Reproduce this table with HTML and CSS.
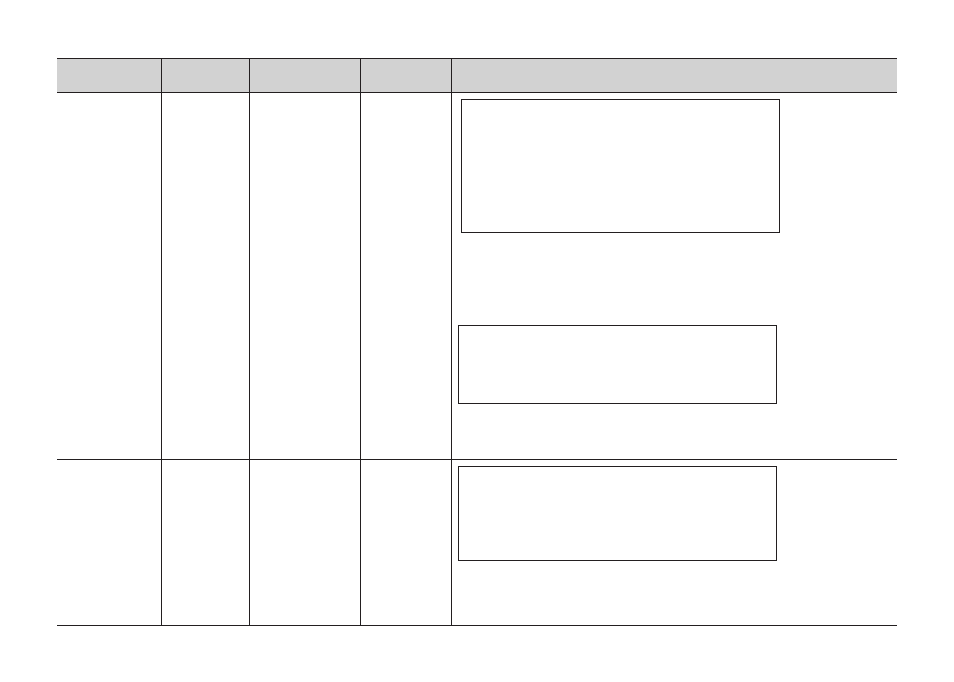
FILE: index.html
```html
<!DOCTYPE html>
<html>
<head>
<meta charset="utf-8">
<link rel="stylesheet" href="styles.css">
</head>
<body>
<div class="table">
  <div class="row head">
    <div class="cell c1"></div>
    <div class="cell c2"></div>
    <div class="cell c3"></div>
    <div class="cell c4"></div>
    <div class="cell c5"></div>
  </div>
  <div class="row r1">
    <div class="cell c1"></div>
    <div class="cell c2"></div>
    <div class="cell c3"></div>
    <div class="cell c4"></div>
    <div class="cell c5">
      <div class="box box-a"></div>
      <div class="box box-b"></div>
    </div>
  </div>
  <div class="row r2">
    <div class="cell c1"></div>
    <div class="cell c2"></div>
    <div class="cell c3"></div>
    <div class="cell c4"></div>
    <div class="cell c5">
      <div class="box box-c"></div>
    </div>
  </div>
</div>
</body>
</html>
```
FILE: styles.css
```css
* { box-sizing: border-box; }
html, body { margin: 0; padding: 0; background: #ffffff; }
body { font-family: "Liberation Sans", Arial, sans-serif; }

.table {
  margin: 58px 0 0 57px;
  width: 840px;
  border-top: 1px solid #231f20;
  display: flex;
  flex-direction: column;
}
.row {
  display: grid;
  grid-template-columns: 105px 88px 111px 91px 445px;
  border-bottom: 1px solid #231f20;
}
.head { height: 34px; background: #d2d2d2; }
.r1 { height: 367px; }
.r2 { height: 166px; }

.cell { border-right: 1px solid #231f20; }
.cell.c5 { border-right: none; display: flex; flex-direction: column; padding-top: 6px; }

.box { border: 1px solid #231f20; width: 319px; }
.box-a { margin-left: 9px; height: 134px; }
.box-b { margin-left: 6px; margin-top: 92px; height: 79px; }
.box-c { margin-left: 6px; height: 95px; }
```
